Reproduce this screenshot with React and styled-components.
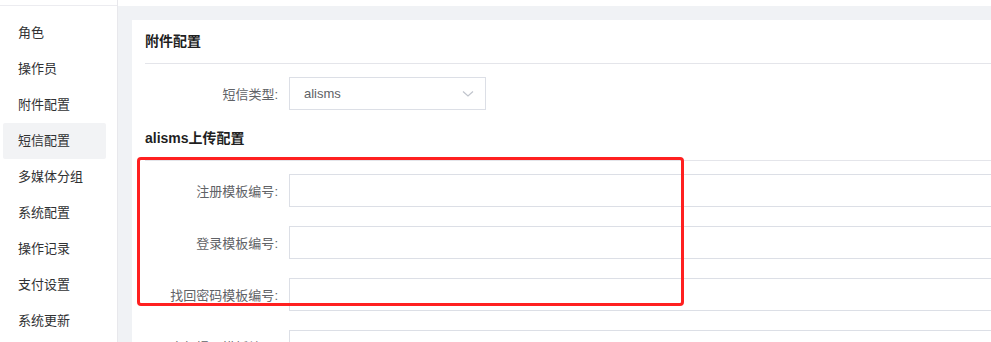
import styled, {createGlobalStyle} from "styled-components";

const Global = createGlobalStyle`
  html, body {
    margin: 0;
    padding: 0;
    background: #fff;
    overflow: hidden;
  }
  body {
    font-family: "Liberation Sans", "Noto Sans CJK SC", sans-serif;
    font-size: 13px;
    color: #333;
  }
`;

const menu = ["角色", "操作员", "附件配置", "短信配置", "多媒体分组", "系统配置", "操作记录", "支付设置", "系统更新"];

const templates = ["注册模板编号", "登录模板编号", "找回密码模板编号", "余额提现模板编号"];

function App(){

    return(
        <Layout>
            <Global/>
            <Side>
                <SideTop/>
                <MenuList>
                    {menu.map((m) => (
                        <MenuItem key={m} $active={m === "短信配置"}>{m}</MenuItem>
                    ))}
                </MenuList>
            </Side>

            <Main>
                <MainTop/>
                <Content>
                    <Card>
                        <CardTitle>附件配置</CardTitle>

                        <FormItem>
                            <Label>短信类型:</Label>
                            <Select>
                                <span>alisms</span>
                                <svg width="12" height="8" viewBox="0 0 12 8">
                                    <polyline points="1,1.5 6,6 11,1.5" fill="none" stroke="#c0c4cc" strokeWidth="1.2"/>
                                </svg>
                            </Select>
                        </FormItem>

                        <SectionTitle>alisms上传配置</SectionTitle>

                        <Fields>
                            {templates.map((t) => (
                                <FormItem key={t}>
                                    <Label>{t}:</Label>
                                    <Input/>
                                </FormItem>
                            ))}
                        </Fields>

                        <Highlight/>
                    </Card>
                </Content>
            </Main>
        </Layout>
    );
}

const Layout = styled.div`
display:flex;
width:991px;
height:342px;
overflow:hidden;
`;

const Side = styled.aside`
width:117px;
flex-shrink:0;
border-right:1px solid #e8e8ec;
background:#fff;
`;

const SideTop = styled.div`
height:5px;
border-bottom:1px solid #ececf0;
`;

const MenuList = styled.ul`
list-style:none;
margin:0;
padding:9px 0 0 3px;
`;

const MenuItem = styled.li`
width:103px;
height:36px;
line-height:36px;
padding-left:15px;
box-sizing:border-box;
border-radius:2px;
font-size:13px;
color:#303133;
background:${p => p.$active ? "#f2f3f5" : "transparent"};
`;

const Main = styled.div`
flex:1;
display:flex;
flex-direction:column;
min-width:0;
`;

const MainTop = styled.div`
height:6px;
flex-shrink:0;
background:#fff;
`;

const Content = styled.div`
flex:1;
min-height:0;
overflow:hidden;
background:#f0f2f5;
padding:14px 0 0 14px;
`;

const Card = styled.div`
position:relative;
background:#fff;
min-height:100%;
padding-left:13px;
`;

const CardTitle = styled.div`
height:43px;
line-height:43px;
font-size:14px;
font-weight:bold;
color:#1f1f1f;
border-bottom:1px solid #e4e5ea;
`;

const FormItem = styled.div`
display:flex;
align-items:center;
margin-top:13px;
height:33px;
`;

const Label = styled.label`
width:144px;
flex-shrink:0;
box-sizing:border-box;
padding-right:11px;
text-align:right;
font-size:13px;
color:#606266;
`;

const Select = styled.div`
width:197px;
height:33px;
box-sizing:border-box;
border:1px solid #dcdfe6;
display:flex;
align-items:center;
justify-content:space-between;
padding:0 11px 0 14px;
font-size:13px;
color:#606266;
`;

const SectionTitle = styled.div`
padding-top:18px;
padding-bottom:11px;
line-height:21px;
font-size:14px;
font-weight:bold;
color:#1f1f1f;
border-bottom:1px solid #e4e5ea;
`;

const Fields = styled.div`
${FormItem}{
    margin-top:0;
    margin-bottom:19px;
}

${FormItem}:first-child{
    margin-top:13px;
}
`;

const Input = styled.div`
flex:1;
height:33px;
box-sizing:border-box;
border:1px solid #dcdfe6;
border-right:none;
`;

const Highlight = styled.div`
position:absolute;
left:5px;
top:137px;
width:547px;
height:149px;
box-sizing:border-box;
border:3px solid #ff2020;
border-radius:4px;
pointer-events:none;
`;

export default App;
